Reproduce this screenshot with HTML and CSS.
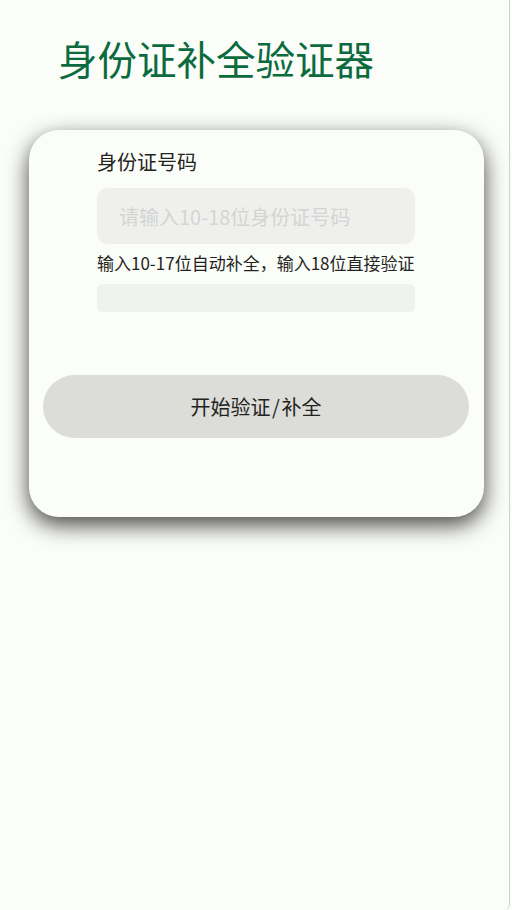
FILE: index.html
```html
<!DOCTYPE html>
<html lang="zh-CN">
<head>
<meta charset="utf-8">
<title>身份证补全验证器</title>
<link rel="stylesheet" href="styles.css">
</head>
<body>
<div class="screen">
  <h1 class="title">身份证补全验证器</h1>
  <div class="card">
    <div class="form">
      <div class="label">身份证号码</div>
      <input class="id-input" type="text" placeholder="请输入10-18位身份证号码">
      <div class="hint">输入10-17位自动补全，输入18位直接验证</div>
      <div class="result"></div>
    </div>
    <button class="submit" type="button">开始验证 / 补全</button>
  </div>
</div>
</body>
</html>
```
FILE: styles.css
```css
html, body {
  margin: 0;
  padding: 0;
  background: #fbfdf9;
}
body {
  font-family: "Noto Sans CJK SC", "Noto Sans", sans-serif;
  color: #1f2421;
}
.screen {
  width: 510px;
  min-height: 910px;
  box-sizing: border-box;
  border-right: 1px solid #cfd0cd;
  border-bottom-right-radius: 6px;
  padding-top: 38px;
  overflow: hidden;
}
.title {
  margin: 0 0 0 58px;
  font-size: 39.5px;
  line-height: 40px;
  font-weight: 400;
  color: #0b6b3e;
}
.card {
  margin: 52px 0 0 29px;
  width: 455px;
  box-sizing: border-box;
  padding: 18px 15px 79px 14px;
  background: #fbfdf9;
  border-radius: 30px;
  box-shadow: 0 8px 22px rgba(0, 0, 0, 0.72);
}
.form {
  display: flex;
  flex-direction: column;
  padding: 0 54px;
}
.label {
  font-size: 20px;
  line-height: 28px;
  color: #1f2421;
}
.id-input {
  margin-top: 12px;
  height: 56px;
  box-sizing: border-box;
  border: none;
  outline: none;
  border-radius: 11px;
  background: #eff0ee;
  padding: 0 22px;
  font-family: inherit;
  font-size: 20px;
  color: #1f2421;
}
.id-input::placeholder {
  color: #d3d5d2;
}
.hint {
  margin-top: 7px;
  font-size: 17px;
  line-height: 24px;
  white-space: nowrap;
  color: #1f2421;
}
.result {
  margin-top: 9px;
  height: 28px;
  border-radius: 6px;
  background: #eff2ef;
}
.submit {
  display: block;
  width: 100%;
  margin-top: 63px;
  height: 63px;
  border: none;
  border-radius: 32px;
  background: #dcdcd8;
  font-family: inherit;
  font-size: 20px;
  color: #1f2421;
  padding: 0;
  word-spacing: -3px;
}
```
